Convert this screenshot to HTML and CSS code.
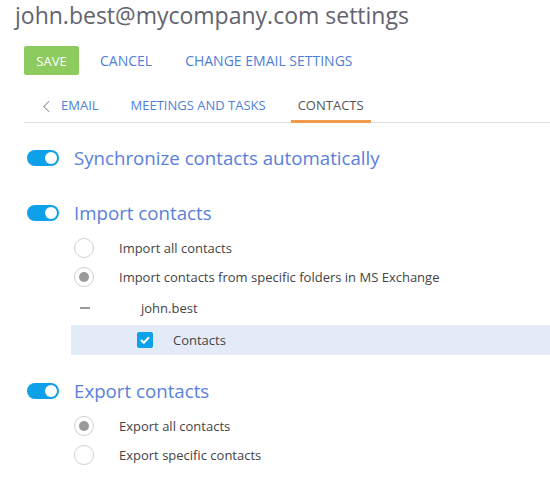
FILE: index.html
```html
<!DOCTYPE html>
<html>
<head>
<meta charset="utf-8">
<link rel="stylesheet" href="styles.css">
</head>
<body>
<div class="page">
  <h1 class="title">john.best@mycompany.com settings</h1>
  <div class="actions">
    <button class="btn-save">SAVE</button>
    <a class="link link-cancel">CANCEL</a>
    <a class="link">CHANGE EMAIL SETTINGS</a>
  </div>
  <div class="tabs">
    <span class="back"><svg width="8" height="13" viewBox="0 0 8 13"><polyline points="7,0.5 1,6.5 7,12.5" fill="none" stroke="#8a8a8a" stroke-width="1.2"/></svg></span>
    <span class="tab">EMAIL</span>
    <span class="tab">MEETINGS AND TASKS</span>
    <span class="tab tab-active">CONTACTS</span>
  </div>

  <div class="section s-first">
    <div class="heading"><span class="toggle"><span class="knob"></span></span><span class="heading-text">Synchronize contacts automatically</span></div>
  </div>

  <div class="section s-import">
    <div class="heading"><span class="toggle"><span class="knob"></span></span><span class="heading-text">Import contacts</span></div>
    <div class="options">
      <div class="option"><span class="radio"></span><span class="opt-text">Import all contacts</span></div>
      <div class="option"><span class="radio checked"></span><span class="opt-text">Import contacts from specific folders in MS Exchange</span></div>
    </div>
    <div class="tree">
      <div class="tree-row tree-parent"><span class="dash"></span><span class="opt-text">john.best</span></div>
      <div class="tree-row tree-child"><span class="checkbox"><svg width="10" height="8" viewBox="0 0 10 8"><polyline points="1,4 3.8,6.8 9,1.2" fill="none" stroke="#fff" stroke-width="2"/></svg></span><span class="opt-text">Contacts</span></div>
    </div>
  </div>

  <div class="section s-export">
    <div class="heading"><span class="toggle"><span class="knob"></span></span><span class="heading-text">Export contacts</span></div>
    <div class="options options-export">
      <div class="option"><span class="radio checked"></span><span class="opt-text">Export all contacts</span></div>
      <div class="option"><span class="radio"></span><span class="opt-text">Export specific contacts</span></div>
    </div>
  </div>
</div>
</body>
</html>
```

FILE: styles.css
```css
* { box-sizing: border-box; }
html, body { margin: 0; padding: 0; background: #fff; }
body { font-family: "Open Sans", "Liberation Sans", sans-serif; color: #444; width: 550px; height: 480px; overflow: hidden; }
.page { padding-left: 24px; }
.title {
  margin: 0 0 0 -9px;
  font-size: 23px;
  line-height: 31px;
  font-weight: 400;
  color: #63636e;
  white-space: nowrap;
}
.actions {
  margin-top: 15px;
  display: flex;
  align-items: center;
  height: 29px;
}
.btn-save {
  height: 29px;
  width: 55px;
  padding: 0;
  border: none;
  border-radius: 2px;
  background: #8dcb5f;
  color: #fff;
  font-family: inherit;
  font-size: 13px;
  margin-right: 21px;
}
.link { color: #4f80d9; font-size: 14px; line-height: 20px; white-space: nowrap; }
.link-cancel { margin-right: 33px; }
.tabs {
  display: flex;
  align-items: flex-end;
  height: 48px;
  border-bottom: 1px solid #dcdcdc;
  padding-left: 19px;
  column-gap: 18px;
}
.back { display: flex; align-items: center; height: 45px; padding-top: 13px; width: 7px; margin-right: -14px; }
.back svg { display: block; }
.tab {
  padding: 17px 7px 5px;
  line-height: 20px;
  font-size: 13px;
  color: #4f80d9;
  border-bottom: 3px solid transparent;
  margin-bottom: -1px;
  white-space: nowrap;
}
.tab-active { color: #555; border-bottom-color: #f2994a; }
.s-first { margin-top: 20px; }
.s-import { margin-top: 25px; }
.s-export { margin-top: 21px; }
.heading { display: flex; align-items: center; height: 30px; }
.toggle {
  width: 32px; height: 16px; border-radius: 8px; background: #0ea0e8;
  margin-left: 3px; margin-right: 15px;
  display: flex; align-items: center; justify-content: flex-end; padding-right: 2px;
  flex: none;
}
.knob { width: 12px; height: 12px; border-radius: 50%; background: #fff; }
.heading-text { font-size: 18.7px; color: #5a80dc; line-height: 24px; white-space: nowrap; }
.options { margin-top: 5px; padding-left: 50px; }
.option { display: flex; align-items: center; height: 29px; }
.radio {
  width: 20px; height: 20px; border-radius: 50%; border: 1px solid #cfcfcf; background: #fff;
  margin-right: 25px; flex: none; display: flex; align-items: center; justify-content: center;
}
.radio.checked::after { content: ""; width: 10px; height: 10px; border-radius: 50%; background: #9a9a9a; }
.opt-text { font-size: 13px; line-height: 18px; color: #444; white-space: nowrap; }
.tree { margin-left: 47px; }
.tree-row { display: flex; align-items: center; }
.tree-parent { height: 34px; padding-left: 9px; }
.dash { width: 10px; height: 2px; background: #999; margin-right: 51px; }
.tree-child { height: 30px; padding-left: 66px; background: #e4ebf8; }
.checkbox {
  width: 16px; height: 16px; border-radius: 2px; background: #0ea0e8; margin-right: 20px;
  display: flex; align-items: center; justify-content: center; flex: none;
}
.checkbox svg { display: block; }
```
